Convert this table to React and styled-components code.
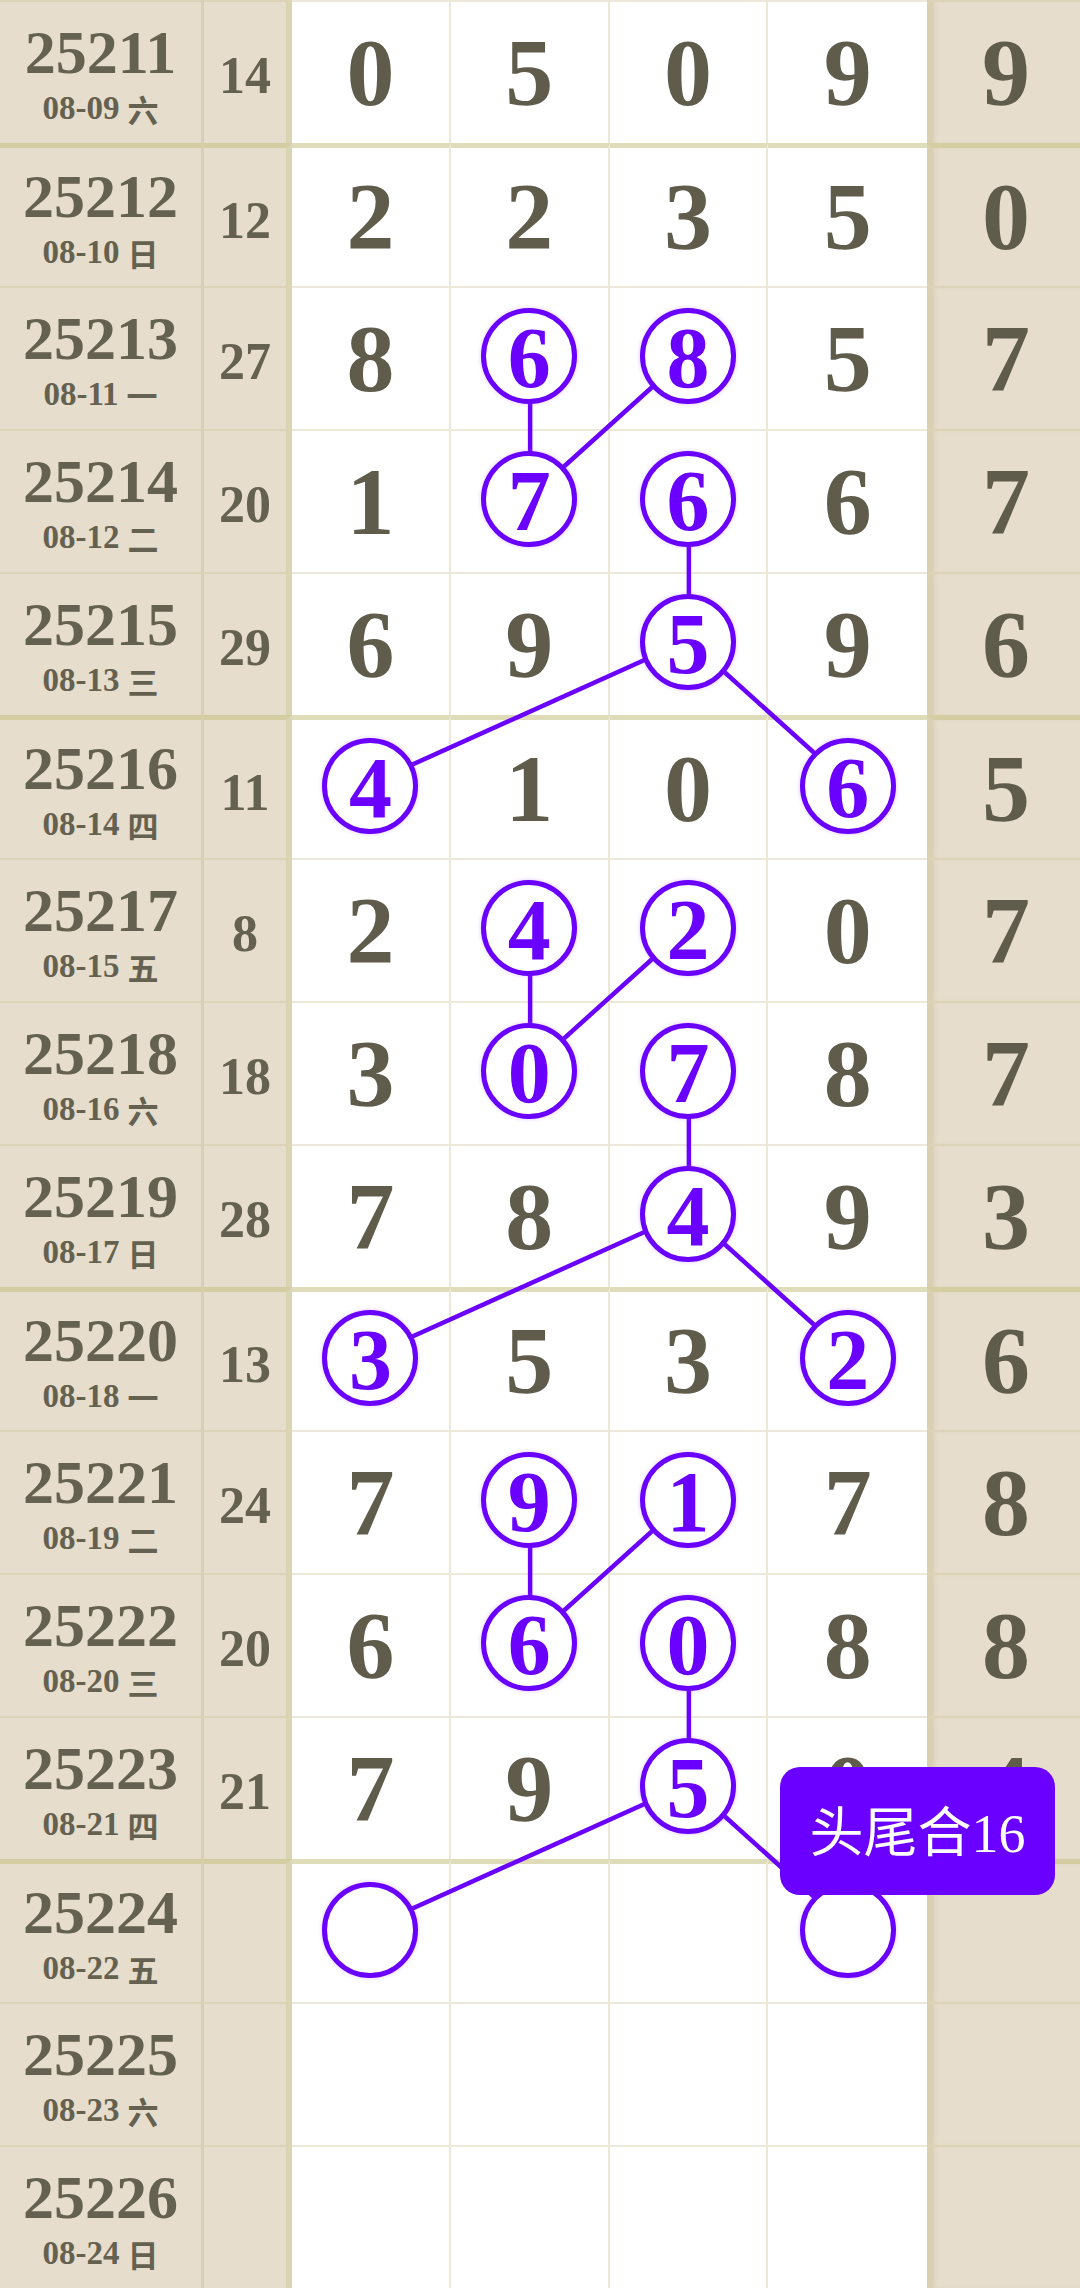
import React from "react";
import styled, { createGlobalStyle, css } from "styled-components";

const ROW_H = 143;
const LEFT = 292;
const COL_W = 158.75;
const PURPLE = "#6a00ff";

const GlobalStyle = createGlobalStyle`
  html, body {
    margin: 0;
    padding: 0;
    background: #ffffff;
  }
`;

const rows = [
  ["25211", "08-09", "六", "14", "0509", "9", []],
  ["25212", "08-10", "日", "12", "2235", "0", []],
  ["25213", "08-11", "一", "27", "8685", "7", [1, 2]],
  ["25214", "08-12", "二", "20", "1766", "7", [1, 2]],
  ["25215", "08-13", "三", "29", "6959", "6", [2]],
  ["25216", "08-14", "四", "11", "4106", "5", [0, 3]],
  ["25217", "08-15", "五", "8", "2420", "7", [1, 2]],
  ["25218", "08-16", "六", "18", "3078", "7", [1, 2]],
  ["25219", "08-17", "日", "28", "7849", "3", [2]],
  ["25220", "08-18", "一", "13", "3532", "6", [0, 3]],
  ["25221", "08-19", "二", "24", "7917", "8", [1, 2]],
  ["25222", "08-20", "三", "20", "6608", "8", [1, 2]],
  ["25223", "08-21", "四", "21", "7950", "4", [2]],
  ["25224", "08-22", "五", "", "", "", [0, 3]],
  ["25225", "08-23", "六", "", "", "", []],
  ["25226", "08-24", "日", "", "", "", []],
];

// groups of 4 rows starting at these indexes share the same link pattern
const groupStarts = [2, 6, 10];

const cx = (c) => LEFT + COL_W * (c + 0.5);
const cy = (r) => r * ROW_H + 68;

const links = groupStarts.flatMap((r) => [
  [r, 1, r + 1, 1],
  [r, 2, r + 1, 1],
  [r + 1, 2, r + 2, 2],
  [r + 2, 2, r + 3, 0],
  [r + 2, 2, r + 3, 3],
]);

const Board = styled.div`
  position: relative;
  width: 1080px;
  font-family: "Liberation Serif", "Noto Sans CJK SC", serif;
`;

const Row = styled.div`
  display: grid;
  grid-template-columns: 204px 88px repeat(4, 1fr) 153px;
  height: ${ROW_H}px;
`;

const rowLine = css`
  box-sizing: border-box;
  border-top: ${(p) =>
    p.$thick ? "5px solid rgba(196, 192, 128, 0.55)" : "2px solid rgba(200, 192, 150, 0.35)"};
`;

const PeriodCell = styled.div`
  ${rowLine};
  background: #e6ddcc;
  border-right: 3px solid #d8cfb6;
  display: flex;
  flex-direction: column;
  align-items: center;
  justify-content: center;
  gap: 9px;
  color: #656150;
`;

const Period = styled.div`
  font-size: 62px;
  font-weight: 700;
  line-height: 1;
`;

const DateLine = styled.div`
  font-size: 33px;
  font-weight: 700;
  line-height: 1;
  display: flex;
  align-items: center;
  gap: 8px;
`;

const Week = styled.span`
  font-family: "Noto Sans CJK SC", sans-serif;
  font-size: 31px;
  font-weight: 700;
  line-height: 1;
`;

const SumCell = styled.div`
  ${rowLine};
  background: #e6ddcc;
  border-right: 6px solid #d8d6b2;
  display: flex;
  align-items: center;
  justify-content: center;
  color: #656150;
  font-size: 52px;
  font-weight: 700;
  padding-top: 6px;
`;

const NumCell = styled.div`
  ${rowLine};
  background: #ffffff;
  border-right: ${(p) => (p.$last ? "none" : "2px solid #ebe8d8")};
  display: flex;
  align-items: center;
  justify-content: center;
  color: #605c4c;
  font-size: 96px;
  font-weight: 700;
  line-height: 1;
`;

const TailCell = styled(NumCell)`
  background: #e6ddcc;
  border-right: none;
  border-left: 5px solid #d9cfb1;
  box-shadow: inset 4px 0 4px -2px rgba(190, 175, 130, 0.35);
`;

const Ring = styled.div`
  position: relative;
  z-index: 2;
  box-sizing: border-box;
  width: 96px;
  height: 96px;
  margin-top: -6px;
  border-radius: 50%;
  border: 5px solid ${PURPLE};
  background: #ffffff;
  box-shadow: 0 0 4px rgba(170, 90, 255, 0.35);
  display: flex;
  align-items: center;
  justify-content: center;
  color: ${PURPLE};
  font-size: 86px;
  font-weight: 700;
  line-height: 1;
  padding-top: 4px;
`;

const Links = styled.svg`
  position: absolute;
  left: 0;
  top: 0;
  z-index: 1;
  pointer-events: none;
`;

const Tip = styled.div`
  position: absolute;
  z-index: 3;
  left: 780px;
  top: 1767px;
  width: 275px;
  height: 128px;
  box-sizing: border-box;
  padding-bottom: 6px;
  border-radius: 20px;
  background: ${PURPLE};
  color: #ffffff;
  display: flex;
  align-items: center;
  justify-content: center;
  font-size: 54px;
  font-family: "Liberation Serif", "Noto Sans CJK SC", serif;
`;

export default function App() {
  return (
    <>
      <GlobalStyle />
      <Board>
        {rows.map(([period, date, week, sum, nums, tail, rings], i) => {
          const thick = i % 4 === 1;
          return (
            <Row key={period}>
              <PeriodCell $thick={thick}>
                <Period>{period}</Period>
                <DateLine>
                  {date}
                  <Week>{week}</Week>
                </DateLine>
              </PeriodCell>
              <SumCell $thick={thick}>{sum}</SumCell>
              {[0, 1, 2, 3].map((c) => (
                <NumCell key={c} $thick={thick} $last={c === 3}>
                  {rings.includes(c) ? <Ring>{nums[c] || ""}</Ring> : nums[c] || ""}
                </NumCell>
              ))}
              <TailCell $thick={thick}>{tail}</TailCell>
            </Row>
          );
        })}
        <Links width="1080" height={ROW_H * rows.length}>
          {links.map(([r1, c1, r2, c2], k) => (
            <line
              key={k}
              x1={cx(c1)}
              y1={cy(r1)}
              x2={cx(c2)}
              y2={cy(r2)}
              stroke={PURPLE}
              strokeWidth="4.5"
            />
          ))}
        </Links>
        <Tip>头尾合16</Tip>
      </Board>
    </>
  );
}
